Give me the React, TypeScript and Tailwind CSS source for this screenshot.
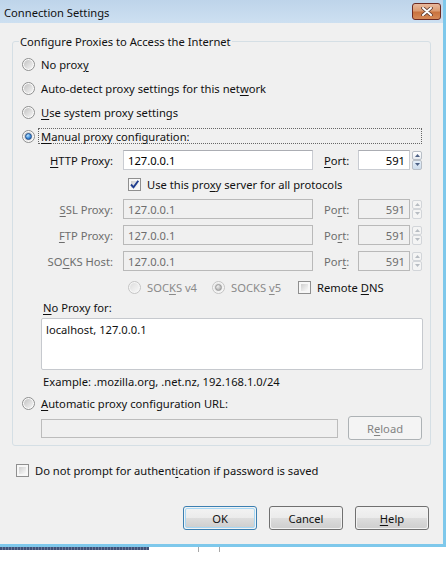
import type { ReactNode } from "react";

function K({ children }: { children: ReactNode }) {
  return <u className="underline decoration-1 underline-offset-[2px]">{children}</u>;
}

function Radio({ checked = false, disabled = false }: { checked?: boolean; disabled?: boolean }) {
  return (
    <div
      className={
        disabled
          ? "w-[13px] h-[13px] shrink-0 rounded-full border border-[#c4c4c4] bg-[#f6f6f6] flex items-center justify-center"
          : "w-[13px] h-[13px] shrink-0 rounded-full border border-[#8e8f8f] bg-[#fbfbfb] flex items-center justify-center"
      }
    >
      <div
        className={
          disabled
            ? "w-[9px] h-[9px] rounded-full bg-[linear-gradient(135deg,#dedede,#f7f7f7)] flex items-center justify-center"
            : "w-[9px] h-[9px] rounded-full bg-[linear-gradient(135deg,#c2c2c2,#f5f5f5)] flex items-center justify-center"
        }
      >
        {checked && !disabled && (
          <div className="w-[7px] h-[7px] rounded-full border border-[#1d4c8c] bg-[radial-gradient(circle_at_35%_30%,#b9e3ff_0%,#3f8fdc_55%,#184b9a_100%)]" />
        )}
        {checked && disabled && (
          <div className="w-[7px] h-[7px] rounded-full border border-[#9a9a9a] bg-[radial-gradient(circle_at_35%_30%,#f0f0f0_0%,#bdbdbd_60%,#9c9c9c_100%)]" />
        )}
      </div>
    </div>
  );
}

function Check({ checked = false }: { checked?: boolean }) {
  return (
    <div className="w-[13px] h-[13px] shrink-0 border border-[#8f8f8f] bg-[#f7f7f7] p-[2px]">
      <div className="w-full h-full bg-[linear-gradient(135deg,#cfcfcf,#fafafa)] flex items-center justify-center">
        {checked && (
          <svg width="11" height="11" viewBox="0 0 11 11" className="-m-[2px]">
            <path d="M2 5.5 L4.5 8.3 L9.3 1.8" fill="none" stroke="#1f3d8f" strokeWidth="1.9" />
          </svg>
        )}
      </div>
    </div>
  );
}

function Field({ value, disabled = false, width, right = false }: { value: string; disabled?: boolean; width: string; right?: boolean }) {
  return (
    <div
      className={[
        width,
        "h-[20px] flex items-center border",
        right ? "justify-end pr-[4px]" : "pl-[4px]",
        disabled
          ? "bg-[#f0f0f0] border-[#b9b9b9] text-[#6d6d6d]"
          : "bg-white border-[#c9ccd2] border-t-[#abadb3] text-black",
      ].join(" ")}
    >
      {value}
    </div>
  );
}

function Arrow({ up, disabled }: { up: boolean; disabled: boolean }) {
  return (
    <div
      className={
        disabled
          ? "flex-1 flex items-center justify-center border border-[#d2d5d9] rounded-[2px] bg-[#f4f4f4]"
          : up
            ? "flex-1 flex items-center justify-center border border-[#b8bec6] rounded-[2px] bg-[linear-gradient(180deg,#ffffff,#e7ebf0)]"
            : "flex-1 flex items-center justify-center border border-[#b8bec6] rounded-[2px] bg-[linear-gradient(180deg,#e4eef8,#cddceb)]"
      }
    >
      <svg width="5" height="3" viewBox="0 0 5 3">
        <path d={up ? "M0 3 L2.5 0 L5 3 Z" : "M0 0 L2.5 3 L5 0 Z"} fill={disabled ? "#b7bcc2" : "#4d6185"} />
      </svg>
    </div>
  );
}

function Spinner({ disabled = false }: { disabled?: boolean }) {
  return (
    <div className="ml-[2px] w-[10px] h-[19px] flex flex-col">
      <Arrow up disabled={disabled} />
      <Arrow up={false} disabled={disabled} />
    </div>
  );
}

function ProxyRow({ label, port, disabled = false }: { label: ReactNode; port: ReactNode; disabled?: boolean }) {
  return (
    <div className={disabled ? "h-[20px] flex items-center text-[#6d6d6d]" : "h-[20px] flex items-center"}>
      <span className="w-[100px] text-right">{label}</span>
      <div className="ml-[10px]">
        <Field value="127.0.0.1" disabled={disabled} width="w-[190px]" />
      </div>
      <span className="ml-[11px] w-[34px]">{port}</span>
      <Field value="591" disabled={disabled} width="w-[52px]" right />
      <Spinner disabled={disabled} />
    </div>
  );
}

function Button({ children, kind = "normal" }: { children: ReactNode; kind?: "normal" | "default" | "disabled" }) {
  if (kind === "disabled") {
    return (
      <div className="w-[74px] h-[24px] flex items-center justify-center rounded-[3px] border border-[#adb2b5] bg-[#f4f4f4] text-[#838383]">
        {children}
      </div>
    );
  }
  return (
    <div
      className={
        kind === "default"
          ? "w-[74px] h-[24px] rounded-[3px] border border-[#3c7fb1] p-px bg-[#f2f2f2]"
          : "w-[74px] h-[24px] rounded-[3px] border border-[#707070] p-px bg-[#f2f2f2]"
      }
    >
      <div
        className={
          kind === "default"
            ? "w-full h-full flex items-center justify-center rounded-[2px] border border-[#a6d7f4] bg-[linear-gradient(180deg,#f2f2f2_0%,#ebebeb_50%,#dddddd_50%,#cfcfcf_100%)]"
            : "w-full h-full flex items-center justify-center rounded-[2px] bg-[linear-gradient(180deg,#f2f2f2_0%,#ebebeb_50%,#dddddd_50%,#cfcfcf_100%)]"
        }
      >
        {children}
      </div>
    </div>
  );
}

function CloseButton() {
  return (
    <div className="w-[29px] h-[17px] rounded-[3px] border border-[#6d2a21] bg-[linear-gradient(180deg,#e9b99d_0%,#dc9c72_45%,#c9733e_55%,#d68a58_100%)] flex items-center justify-center">
      <svg width="12" height="9" viewBox="0 0 12 9">
        <path d="M2 1 L10 8 M10 1 L2 8" stroke="#5b3a30" strokeWidth="3.6" strokeLinecap="round" />
        <path d="M2 1 L10 8 M10 1 L2 8" stroke="#ffffff" strokeWidth="2" strokeLinecap="round" />
      </svg>
    </div>
  );
}

export default function App() {
  return (
    <div className="w-[446px] h-[579px] overflow-hidden bg-white font-['Noto_Sans',sans-serif] text-[11.2px] leading-none text-[#111]">
      <div className="w-[446px] h-[547px] flex flex-col bg-[#f0f0f0] border-r-[3px] border-b-[3px] border-[#7ec8eb]">
        {/* caption */}
        <div className="h-[23px] shrink-0 flex items-center justify-between pl-[4px] pr-[2px] bg-[linear-gradient(180deg,#bed4ea,#cde0f1)]">
          <span className="pt-[2px]">Connection Settings</span>
          <CloseButton />
        </div>

        <div className="pt-[13px] flex flex-col">
          <fieldset className="ml-[12px] w-[419px] rounded-[3px] border border-[#d5dfe5] pb-[5px]">
            <legend className="ml-[6px] px-[1px]">Configure Proxies to Access the Internet</legend>

            <div className="mt-[5px] flex flex-col">
              <div className="h-[24px] flex items-center gap-[6px] pl-[9px]">
                <Radio />
                <span>
                  No prox<K>y</K>
                </span>
              </div>
              <div className="h-[24px] flex items-center gap-[6px] pl-[9px]">
                <Radio />
                <span>
                  Auto-detect proxy settings for this net<K>w</K>ork
                </span>
              </div>
              <div className="h-[24px] flex items-center gap-[6px] pl-[9px]">
                <Radio />
                <span>
                  <K>U</K>se system proxy settings
                </span>
              </div>
              <div className="h-[24px] flex items-center pl-[9px]">
                <Radio checked />
                <span className="ml-[3px] mr-[8px] flex-1 h-[16px] flex items-center pl-[2px] border border-dotted border-[#666]">
                  <K>M</K>anual proxy configuration:
                </span>
              </div>
            </div>

            <div className="mt-[2px] flex flex-col">
              <ProxyRow
                label={
                  <>
                    <K>H</K>TTP Proxy:
                  </>
                }
                port={
                  <>
                    <K>P</K>ort:
                  </>
                }
              />
              <div className="h-[29px] flex items-center gap-[6px] pl-[115px]">
                <Check checked />
                <span>
                  Use this pro<K>x</K>y server for all protocols
                </span>
              </div>
              <div className="flex flex-col gap-[6px]">
                <ProxyRow
                  disabled
                  label={
                    <>
                      <K>S</K>SL Proxy:
                    </>
                  }
                  port={
                    <>
                      Po<K>r</K>t:
                    </>
                  }
                />
                <ProxyRow
                  disabled
                  label={
                    <>
                      <K>F</K>TP Proxy:
                    </>
                  }
                  port={
                    <>
                      Po<K>r</K>t:
                    </>
                  }
                />
                <ProxyRow
                  disabled
                  label={
                    <>
                      SO<K>C</K>KS Host:
                    </>
                  }
                  port={
                    <>
                      Por<K>t</K>:
                    </>
                  }
                />
              </div>
              <div className="mt-[4px] h-[24px] flex items-center pl-[115px]">
                <div className="w-[84px] flex items-center gap-[6px] text-[#8a8a8a]">
                  <Radio disabled />
                  <span>
                    SOC<K>K</K>S v4
                  </span>
                </div>
                <div className="w-[86px] flex items-center gap-[6px] text-[#8a8a8a]">
                  <Radio checked disabled />
                  <span>
                    SOCKS <K>v</K>5
                  </span>
                </div>
                <div className="flex items-center gap-[6px]">
                  <Check />
                  <span>
                    Remote <K>D</K>NS
                  </span>
                </div>
              </div>
            </div>

            <div className="h-[16px] flex items-center pl-[30px]">
              <span>
                <K>N</K>o Proxy for:
              </span>
            </div>
            <div className="mt-[3px] ml-[28px] w-[382px] h-[52px] rounded-[2px] border border-[#c6c9ce] bg-white pl-[4px] pt-[5px]">
              localhost, 127.0.0.1
            </div>
            <div className="h-[22px] flex items-center pl-[30px]">Example: .mozilla.org, .net.nz, 192.168.1.0/24</div>
            <div className="h-[22px] flex items-center gap-[6px] pl-[9px]">
              <Radio />
              <span>
                <K>A</K>utomatic proxy configuration URL:
              </span>
            </div>
            <div className="mt-[2px] h-[24px] flex items-center pl-[28px]">
              <div className="w-[297px] h-[19px] border border-[#bcbcbc] bg-[#f0f0f0]" />
              <div className="ml-[10px]">
                <Button kind="disabled">
                  R<K>e</K>load
                </Button>
              </div>
            </div>
          </fieldset>

          <div className="mt-[12px] h-[24px] flex items-center gap-[6px] pl-[16px]">
            <Check />
            <span>
              Do not prompt for authent<K>i</K>cation if password is saved
            </span>
          </div>

          <div className="mt-[24px] flex gap-[12px] pl-[183px]">
            <Button kind="default">OK</Button>
            <Button>Cancel</Button>
            <Button>
              <K>H</K>elp
            </Button>
          </div>
        </div>
      </div>

      {/* strip of the window beneath */}
      <div className="flex items-start">
        <div className="w-[149px] h-[3px] bg-[repeating-linear-gradient(90deg,#3f5076_0px,#3f5076_2px,#6a7898_2px,#6a7898_3px)]" />
        <div className="ml-[49px] w-px h-[5px] bg-[#a8a8a8]" />
        <div className="ml-[20px] w-px h-[5px] bg-[#a8a8a8]" />
      </div>
    </div>
  );
}
